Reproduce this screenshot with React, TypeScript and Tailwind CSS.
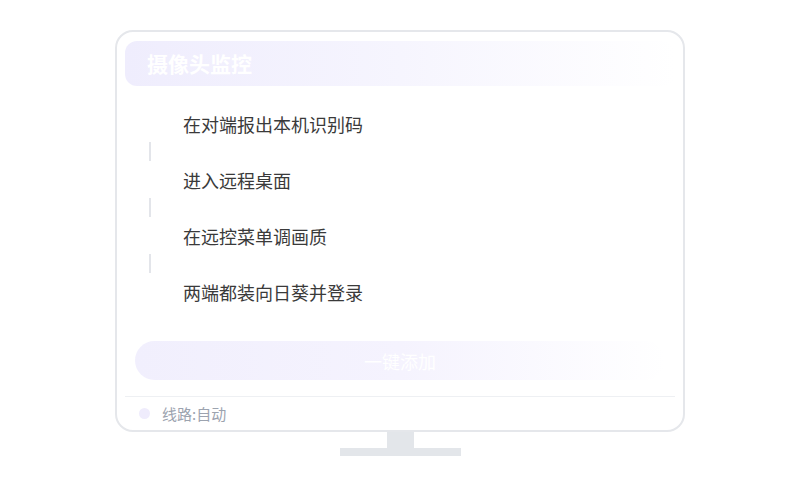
import React from 'react';

const steps = ['在对端报出本机识别码', '进入远程桌面', '在远控菜单调画质', '两端都装向日葵并登录'];

export default function App() {
  return (
    <div
      className="flex h-[500px] w-[800px] flex-col items-center bg-white pt-[30px]"
      style={{ fontFamily: '"Noto Sans CJK SC", "Noto Sans", sans-serif' }}
    >
      {/* monitor */}
      <div className="flex h-[402px] w-[570px] flex-col rounded-[18px] border-2 border-[#e5e7eb] bg-white px-2 pt-[9px]">
        <div className="flex h-[45px] items-center rounded-[12px] bg-gradient-to-r from-[#efedfd] via-[#f6f5fe] to-white pl-[22px]">
          <span className="text-[21px] font-bold leading-none text-white">摄像头监控</span>
        </div>

        <div className="mt-[26px] flex flex-col pl-[24px]">
          {steps.map((s, i) => (
            <div key={s} className="flex flex-col">
              <div className="ml-[34px] h-6 text-[18px] leading-6 text-[#3a3a3a]">{s}</div>
              {i < steps.length - 1 && <div className="mb-[7px] mt-[6px] h-[19px] w-[2px] bg-[#e3e5ea]" />}
            </div>
          ))}
        </div>

        <div className="mx-[10px] mt-[37px] flex h-[39px] items-center justify-center rounded-full bg-gradient-to-r from-[#f1effd] via-[#f5f3fe] to-white">
          <span className="text-[18px] leading-none text-white">一键添加</span>
        </div>

        <div className="mt-[16px] h-px bg-[#eef0f3]" />

        <div className="flex h-[33px] items-center pl-[14px]">
          <span className="h-[11px] w-[11px] rounded-full bg-[#efecfc]" />
          <span className="ml-[12px] text-[15px] leading-none text-[#9ca3af]">线路:自动</span>
        </div>
      </div>

      {/* stand */}
      <div className="h-[16px] w-[27px] bg-[#e3e6ea]" />
      <div className="h-[8px] w-[121px] bg-[#e3e6ea]" />
    </div>
  );
}
